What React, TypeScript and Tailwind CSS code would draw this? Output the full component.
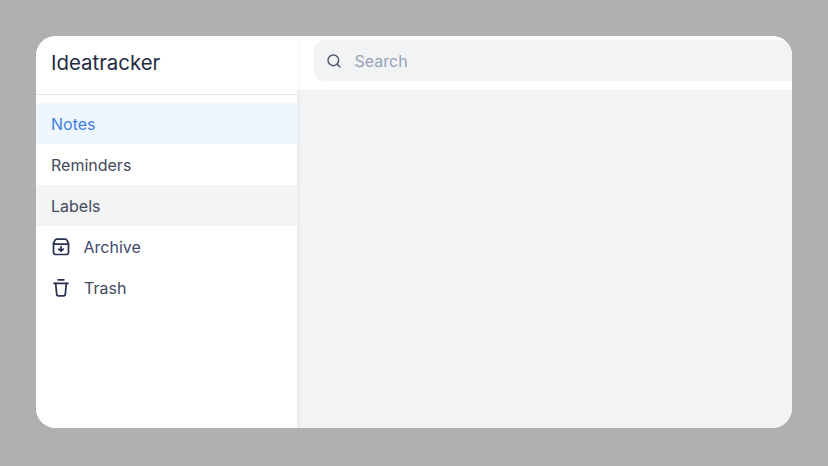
import { Search } from "lucide-react";

function ArchiveIcon() {
  return (
    <svg width="20" height="20" viewBox="0 0 24 24" fill="none" stroke="#2a3052" strokeWidth="2.1" strokeLinecap="round" strokeLinejoin="round">
      <path d="M7 2.6h10a2.6 2.6 0 0 1 2.3 1.4L21 7.6v10.9a2.5 2.5 0 0 1-2.5 2.5h-13A2.5 2.5 0 0 1 3 18.5V7.6L4.7 4A2.6 2.6 0 0 1 7 2.6Z" />
      <path d="M3 8.4h18" />
      <path d="M12 11.6v5.4M9.4 14.6 12 17l2.6-2.4" />
    </svg>
  );
}

function TrashIcon() {
  return (
    <svg width="20" height="20" viewBox="0 0 24 24" fill="none" stroke="#2a3052" strokeWidth="2.1" strokeLinecap="round" strokeLinejoin="round">
      <path d="M3.6 6.4h16.8" />
      <path d="M8.6 2.2h6.8" />
      <path d="M5.6 6.4 6.8 19.2A2.2 2.2 0 0 0 9 21.4h6a2.2 2.2 0 0 0 2.2-2.2l1.2-12.8" />
    </svg>
  );
}

export default function App() {
  return (
    <div className="h-[466px] w-[828px] overflow-hidden bg-[#b0b0b0] pt-[36px] px-[36px] font-['Inter','Liberation_Sans',sans-serif]">
      <div className="flex h-[392px] w-[756px] overflow-hidden rounded-[20px] bg-white">
        <aside className="relative z-10 w-[261px] shrink-0 bg-white shadow-[2px_0_4px_rgba(0,0,0,0.04)]">
          <div className="flex h-[59px] items-center border-b border-[#e5e7eb] pl-[15px] text-[20.4px] leading-[28px] text-[#1f2a44]">
            <span className="-mt-[5px]">Ideatracker</span>
          </div>
          <nav className="pt-[8px] text-[16px] leading-[24px]">
            <div className="flex h-[41px] items-center bg-[#eff6ff] pl-[15px] text-[#3b7fe0]">Notes</div>
            <div className="flex h-[41px] items-center pl-[15px] text-[#434a5a]">Reminders</div>
            <div className="flex h-[41px] items-center bg-[#f3f4f6] pl-[15px] text-[#434a5a]">Labels</div>
            <div className="flex h-[41px] items-center gap-[13px] pl-[15px] text-[#3f4a6b]">
              <ArchiveIcon />
              <span className="-ml-[0.5px]">Archive</span>
            </div>
            <div className="flex h-[41px] items-center gap-[13px] pl-[15px] text-[#434a5a]">
              <TrashIcon />
              <span>Trash</span>
            </div>
          </nav>
        </aside>
        <main className="flex min-w-0 flex-1 flex-col bg-[#f1f3f5]">
          <div className="h-[54px] shrink-0 bg-white pl-[17px] pt-[4px] shadow-[0_1px_2px_rgba(0,0,0,0.02)]">
            <div className="flex h-[41px] w-[500px] items-center gap-[12.5px] rounded-[10px] bg-[#f1f3f5] pl-[12px] text-[16px] text-[#94a3b8]">
              <Search size={16} strokeWidth={2.2} color="#515a70" />
              <span>Search</span>
            </div>
          </div>
        </main>
      </div>
    </div>
  );
}
